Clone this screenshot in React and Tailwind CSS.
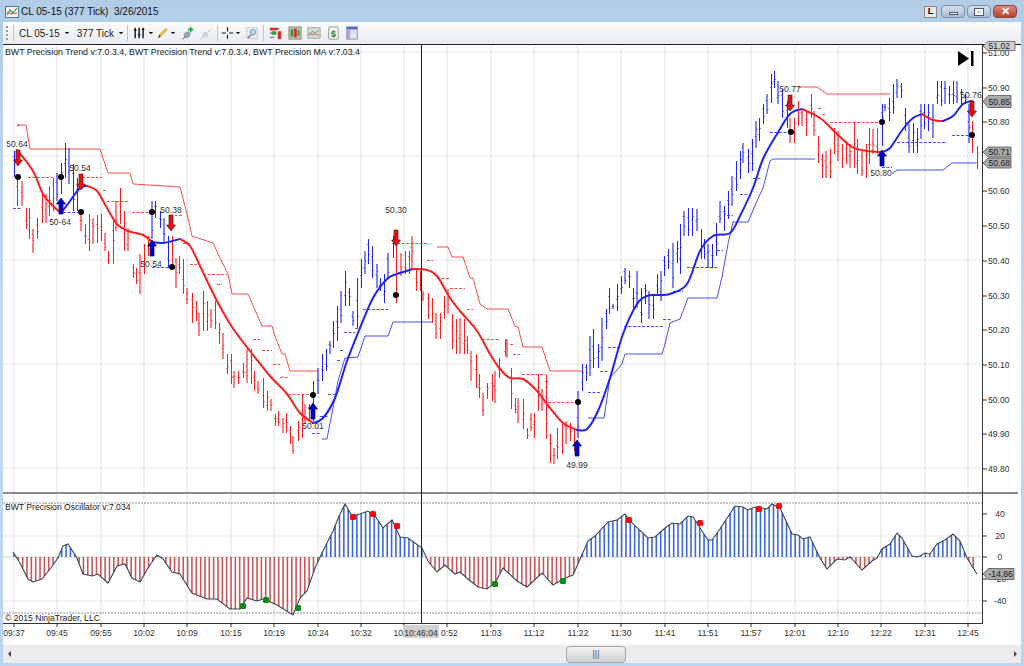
import { ChevronDown } from 'lucide-react';

const FONT = '"Liberation Sans", Arial, sans-serif';
const BLUE = '#1f24f0';
const RED = '#fb2020';

// [x, top, bottom] for every price bar, read off the chart
const BARS = [
  [14,150,176],[17,175,205],[22,180,205],[26,207,228],[29,207,238],[33,228,252],[37,217,238],[42,193,222],[46,193,222],[49,185,215],[53,177,210],
  [57,172,200],[61,162,193],[65,142,177],[69,147,183],[73,163,210],[77,177,210],[81,210,230],[85,223,243],[89,213,250],[93,217,243],[97,214,242],[101,213,240],
  [105,232,250],[108,250,263],[113,220,263],[116,200,230],[120,187,223],[124,210,250],[128,227,250],[133,263,277],[136,267,283],[140,253,293],[144,243,273],[148,235,255],
  [152,200,238],[155,200,217],[160,210,227],[164,217,243],[168,235,267],[172,235,267],[176,257,287],[179,255,273],[183,258,293],[187,287,303],[192,292,322],[196,300,320],
  [199,312,335],[203,290,330],[207,300,330],[211,308,327],[215,300,328],[219,322,343],[223,332,358],[227,353,373],[231,353,383],[234,370,387],[238,370,383],[243,362,377],
  [247,348,382],[251,348,383],[254,370,390],[258,380,393],[263,377,407],[267,390,410],[271,398,410],[275,413,425],[278,410,425],[283,417,432],[286,412,432],[290,425,443],
  [293,435,453],[298,420,440],[302,393,437],[305,403,423],[309,403,420],[313,380,420],[318,367,393],[322,353,380],[326,348,370],[330,340,353],[333,320,347],[337,305,340],
  [341,290,322],[345,270,305],[349,287,305],[353,310,325],[357,277,327],[361,258,287],[365,250,273],[368,238,263],[372,245,277],[377,263,287],[380,277,290],[384,273,302],
  [388,252,277],[393,235,257],[396,235,302],[401,252,275],[405,250,273],[409,250,273],[412,235,268],[416,267,290],[420,270,290],[423,290,300],[428,292,318],[432,297,322],
  [436,312,338],[440,312,338],[444,295,318],[448,288,313],[452,313,348],[456,318,353],[460,317,353],[464,318,353],[467,335,353],[471,350,380],[476,353,387],[479,373,397],
  [483,392,415],[487,382,398],[492,373,400],[495,370,402],[499,357,377],[505,338,355],[507,338,357],[511,367,408],[515,397,412],[518,397,422],[523,398,428],[527,427,438],
  [531,412,430],[534,412,437],[538,373,410],[542,388,410],[546,373,438],[550,433,462],[554,447,463],[557,427,458],[562,422,453],[566,420,443],[570,422,440],[574,427,450],
  [578,390,437],[582,363,390],[586,363,380],[590,335,375],[593,328,367],[598,343,367],[602,317,360],[606,308,328],[609,287,313],[613,303,308],[617,283,310],[621,275,293],
  [625,267,283],[629,270,287],[633,287,310],[637,270,307],[641,287,322],[645,283,303],[649,290,318],[653,293,318],[657,273,293],[661,270,300],[664,255,275],[668,248,268],
  [673,242,287],[677,240,262],[680,223,273],[684,210,235],[688,207,235],[692,207,235],[697,208,230],[701,228,258],[704,238,258],[708,243,267],[712,243,267],[716,222,255],
  [720,200,222],[724,205,230],[728,190,218],[732,175,205],[736,160,190],[740,150,178],[743,142,162],[748,148,172],[752,138,170],[756,120,147],[759,117,140],[763,103,123],
  [767,93,113],[771,73,102],[774,70,87],[778,80,103],[782,88,117],[787,100,127],[790,117,142],[794,117,142],[798,100,125],[802,107,125],[806,110,135],[811,93,117],
  [814,110,135],[818,135,162],[822,153,177],[826,150,177],[830,148,177],[834,127,153],[838,130,160],[842,143,167],[846,140,163],[850,143,167],[854,122,167],[857,138,173],
  [862,150,175],[866,143,177],[869,127,163],[873,128,153],[877,127,153],[882,103,145],[885,103,110],[889,97,120],[893,83,113],[897,78,97],[901,82,97],[905,107,130],
  [909,123,152],[913,122,152],[917,127,152],[921,103,138],[924,103,128],[928,103,130],[933,103,137],[937,80,103],[941,80,105],[945,80,103],[949,85,103],[953,80,103],
  [957,80,102],[961,88,105],[965,93,103],[969,103,142],[972,120,152],[977,145,168],
];

// x ranges where the bars are blue
const BLUE_RANGES = [[10,16],[57,78],[150,170],[312,394],[577,788],[880,935],[937,970]];

const MA = [
  [RED, [[17,149],[33,170],[43,193],[53,205],[61,212]]],
  [BLUE, [[61,212],[70,200],[80,187],[87,185]]],
  [RED, [[87,185],[97,190],[107,207],[117,223],[128,230],[143,234],[152,241]]],
  [BLUE, [[152,241],[163,242],[180,238]]],
  [RED, [[180,238],[190,245],[200,265],[217,300],[232,326],[250,350],[270,375],[287,393],[300,412],[313,422]]],
  [BLUE, [[313,422],[323,417],[335,397],[347,360],[360,327],[373,297],[387,278],[397,273],[413,268]]],
  [RED, [[413,268],[427,269],[437,275],[450,297],[460,310],[477,330],[490,353],[500,368],[510,377],[523,378],[537,390],[550,407],[563,422],[577,429]]],
  [BLUE, [[577,429],[587,428],[598,410],[610,377],[623,333],[637,303],[647,295],[657,294],[670,293],[687,283],[700,250],[713,235],[730,232],[740,215],[753,187],[763,158],[777,133],[790,113],[802,108]]],
  [RED, [[802,108],[820,117],[837,133],[852,146],[867,150],[882,151]]],
  [BLUE, [[882,151],[890,147],[903,128],[913,117],[922,113]]],
  [RED, [[922,113],[933,119],[943,120]]],
  [BLUE, [[943,120],[953,115],[963,103],[972,100]]],
];

const STOPS = [
  [RED, '17,124 26,124 30,148 100,148 108,172 130,172 133,183 180,186 187,213 192,235 213,242 220,257 228,273 232,293 248,293 262,325 272,325 275,335 282,353 285,353 290,370 318,370'],
  [BLUE, '322,438 327,438 333,407 338,380 345,357 358,356 365,335 388,335 393,321 432,321'],
  [RED, '437,246 448,246 452,256 463,256 470,277 473,277 480,303 487,308 508,308 515,325 518,326 523,346 542,346 550,370 583,370'],
  [BLUE, '588,417 604,417 610,377 622,363 625,353 662,353 665,343 670,322 680,318 688,297 717,297 722,276 728,243 733,221 748,221 757,200 763,187 770,160 773,158 815,158'],
  [RED, '798,86 817,86 827,93 890,93'],
  [BLUE, '892,173 897,169 943,169 952,162 976,162'],
];

// dashed levels: x1, x2, y
const RED_LEVELS = [[17,20,124],[28,55,176],[82,102,176],[103,107,189],[107,128,200],[132,152,211],[170,182,214],[183,190,242],[190,197,263],[203,227,273],[217,222,283],[253,260,338],[262,272,349],[273,280,363],[280,288,376],[288,313,393],[397,427,242],[427,433,259],[437,450,277],[450,465,287],[467,473,308],[472,477,324],[482,500,338],[510,513,343],[513,520,353],[522,545,373],[545,548,380],[548,577,401],[830,882,121],[818,822,107],[822,825,113]];
const BLUE_LEVELS = [[13,22,207],[63,80,211],[152,172,266],[312,320,432],[320,328,415],[328,335,393],[337,340,359],[340,343,349],[344,355,331],[355,360,327],[363,390,308],[588,600,391],[600,608,370],[608,620,346],[624,663,325],[663,671,318],[673,683,290],[687,718,266],[717,723,249],[727,733,214],[740,748,193],[753,761,177],[770,790,131],[882,892,166],[897,947,141],[952,972,134]];

const OSC = [[13,551],[20,562],[28,578],[33,581],[42,578],[50,568],[58,557],[63,545],[68,543],[77,557],[83,573],[92,575],[98,573],[108,582],[117,565],[125,563],[132,577],[140,581],[148,567],[157,554],[163,558],[172,571],[180,573],[192,592],[207,598],[217,598],[230,608],[240,608],[247,597],[257,600],[263,598],[277,604],[293,614],[300,597],[307,590],[315,567],[322,552],[333,530],[340,513],[345,503],[352,515],[360,513],[368,510],[375,515],[383,527],[392,519],[400,536],[408,537],[422,547],[428,560],[437,571],[445,564],[455,573],[460,571],[468,578],[478,586],[487,588],[495,582],[503,567],[517,580],[527,586],[542,572],[553,584],[563,578],[573,574],[588,540],[595,535],[608,521],[617,519],[625,513],[633,523],[648,537],[655,536],[665,527],[672,522],[680,523],[688,515],[693,516],[700,527],[708,539],[712,539],[720,528],[735,505],[743,506],[748,509],[755,506],[767,508],[772,503],[780,507],[792,533],[798,534],[803,538],[810,536],[820,557],[827,568],[837,558],[845,559],[850,556],[862,569],[872,560],[877,557],[882,548],[890,543],[897,532],[902,537],[912,555],[918,556],[925,552],[930,553],[937,543],[945,539],[953,533],[960,540],[967,557],[977,573]];

const TIMES = [[14,'09:37'],[57,'09:45'],[101,'09:55'],[144,'10:02'],[187,'10:09'],[231,'10:15'],[274,'10:19'],[318,'10:24'],[361,'10:32'],[404,'10:39'],[447,'10:52'],[491,'11:03'],[534,'11:12'],[578,'11:22'],[621,'11:30'],[665,'11:41'],[708,'11:51'],[751,'11:57'],[795,'12:01'],[838,'12:10'],[881,'12:22'],[925,'12:31'],[968,'12:45']];
const PRICES = [[52,'51.00'],[87,'50.90'],[121,'50.80'],[190,'50.60'],[225,'50.50'],[260,'50.40'],[295,'50.30'],[329,'50.20'],[364,'50.10'],[399,'50.00'],[433,'49.90'],[468,'49.80']];
const OSC_TICKS = [[513,'40'],[535,'20'],[556,'0'],[578,'-20'],[600,'-40']];

const DOWN = [[18,157],[81,181],[171,222],[396,237],[790,102],[972,108]];
const UP = [[61,205],[152,247],[313,410],[577,447],[882,157]];
const SIGNAL_LABELS = [[17,146,'50.64'],[60,224,'50-64'],[80,170,'50.54'],[171,212,'50.38'],[151,266,'50.54'],[396,212,'50.30'],[313,428,'50.01'],[577,467,'49.99'],[790,91,'50.77'],[881,175,'50.80'],[971,97,'50.76']];
const DOTS = [[18,176],[61,176],[81,211],[152,211],[172,266],[313,394],[396,294],[578,401],[791,131],[882,121],[972,134]];
const GREEN_DOTS = [[243,605],[266,599],[298,607],[495,583],[563,580]];
const RED_DOTS = [[353,516],[373,513],[397,525],[629,519],[700,522],[759,508],[779,505]];
const TAGS = [[45,4.5,'51.02','#cfcfcf',1015],[100.5,6,'50.85','#a9a9a9',1011],[151,5,'50.71','#a9a9a9',1011],[162,5,'50.68','#a9a9a9',1011],[573,5.5,'-14.86','#a9a9a9',1014]];

const smooth = (pts) => {
  let d = `M${pts[0][0]} ${pts[0][1]}`;
  for (let i = 0; i < pts.length - 1; i++) {
    const p0 = pts[i - 1] || pts[i];
    const p1 = pts[i];
    const p2 = pts[i + 1];
    const p3 = pts[i + 2] || p2;
    const c1x = p1[0] + (p2[0] - p0[0]) / 6;
    const c1y = p1[1] + (p2[1] - p0[1]) / 6;
    const c2x = p2[0] - (p3[0] - p1[0]) / 6;
    const c2y = p2[1] - (p3[1] - p1[1]) / 6;
    d += ` C${c1x} ${c1y} ${c2x} ${c2y} ${p2[0]} ${p2[1]}`;
  }
  return d;
};

const oscAt = (x) => {
  for (let i = 0; i < OSC.length - 1; i++) {
    const [x1, y1] = OSC[i];
    const [x2, y2] = OSC[i + 1];
    if (x >= x1 && x <= x2) return y1 + ((y2 - y1) * (x - x1)) / (x2 - x1);
  }
  return 556;
};

const barColor = (x) => (BLUE_RANGES.some(([a, b]) => x >= a && x <= b) ? BLUE : RED);

const Arrow = ({ x, y, up }) => (
  <path
    transform={`translate(${x} ${y})${up ? '' : ' rotate(180)'}`}
    d="M-2 8V-2H-4.5L0-8L4.5-2H2V8Z"
    fill={up ? '#0000c0' : '#e81010'}
    stroke={up ? '#000080' : '#502020'}
    strokeWidth="0.7"
  />
);

const Chart = () => {
  const oscLines = [];
  for (let x = 14; x <= 977; x += 4.34) oscLines.push(x);
  return (
    <svg className="block overflow-visible relative" width="1015" height="599" viewBox="3 44 1015 599" style={{ fontFamily: FONT }}>
      {/* grid */}
      {TIMES.map(([x]) => (
        <line key={x} x1={x} x2={x} y1="45" y2="622" stroke="#e5e5e5" strokeWidth="1.2" />
      ))}
      {[51, 155, 259, 363, 467, 535, 600].map((y) => (
        <line key={y} x1="3" x2="982" y1={y} y2={y} stroke="#e8e8e8" strokeWidth="1.2" />
      ))}

      {/* upper pane */}
      {STOPS.map(([c, pts]) => (
        <polyline key={pts} points={pts} fill="none" stroke={c} strokeWidth="1" opacity="0.8" />
      ))}
      {RED_LEVELS.map(([a, b, y]) => (
        <line key={`${a}-${y}`} x1={a} x2={b} y1={y + 0.5} y2={y + 0.5} stroke={RED} strokeDasharray="3 1.5" opacity="0.8" />
      ))}
      {BLUE_LEVELS.map(([a, b, y]) => (
        <line key={`${a}-${y}`} x1={a} x2={b} y1={y + 0.5} y2={y + 0.5} stroke={BLUE} strokeDasharray="3 1.5" opacity="0.8" />
      ))}
      {BARS.map(([x, top, bottom], i) => {
        const c = barColor(x);
        const h = bottom - top;
        const blurred = i % 3 === 2;
        const left = Math.round(top + h * (0.2 + (i % 5) * 0.12)) + 0.5;
        const right = Math.round(top + h * (0.3 + (i % 4) * 0.15)) + 0.5;
        const bx = blurred ? x : x + 0.5;
        return (
          <g key={x} stroke={c}>
            <line x1={bx} x2={bx} y1={top} y2={bottom} strokeWidth={blurred ? 1.3 : 1} opacity={blurred ? 0.85 : 1} />
            <line x1={bx - 1.5} x2={bx} y1={left} y2={left} opacity="0.6" />
            <line x1={bx} x2={bx + 1.5} y1={right} y2={right} opacity="0.6" />
          </g>
        );
      })}
      {MA.map(([c, pts]) => (
        <path key={pts[0].join()} d={smooth(pts)} fill="none" stroke={c} strokeWidth="2" strokeLinecap="round" />
      ))}
      {DOTS.map(([x, y]) => (
        <circle key={x} cx={x} cy={y} r="3" fill="#000" />
      ))}
      {DOWN.map(([x, y]) => (
        <Arrow key={x} x={x} y={y} />
      ))}
      {UP.map(([x, y]) => (
        <Arrow key={x} x={x} y={y} up />
      ))}
      {SIGNAL_LABELS.map(([x, y, t]) => (
        <text key={x} x={x} y={y} textAnchor="middle" fontSize="8.5" fill="#333">{t}</text>
      ))}
      <text x="5" y="54" fontSize="8.8" fill="#222">BWT Precision Trend v:7.0.3.4, BWT Precision Trend v:7.0.3.4, BWT Precision MA v:7.03.4</text>
      <path d="M958 50L969 57.5L958 65Z" fill="#000" />
      <rect x="971" y="50" width="2.5" height="15" fill="#000" />

      {/* lower pane */}
      <line x1="3" x2="1018" y1="492" y2="492" stroke="#8c8c8c" strokeWidth="2" />
      <line x1="3" x2="982" y1="502" y2="502" stroke="#777" strokeWidth="0.8" strokeDasharray="2 1" />
      <line x1="3" x2="982" y1="612" y2="612" stroke="#777" strokeWidth="0.8" strokeDasharray="2 1" />
      <line x1="3" x2="982" y1="556" y2="556" stroke="#d0d0d0" />
      {oscLines.map((x) => {
        const y = oscAt(x);
        return (
          <line key={x} x1={x} x2={x} y1="556" y2={y} stroke={y < 556 ? '#3c68dc' : '#c9565a'} strokeWidth="1.6" />
        );
      })}
      <polyline points={OSC.map((p) => p.join(',')).join(' ')} fill="none" stroke="#3f4650" strokeWidth="1.1" />
      {GREEN_DOTS.map(([x, y]) => (
        <rect key={x} x={x - 3} y={y - 3} width="6" height="6" rx="1.5" fill="#0a8a16" />
      ))}
      {RED_DOTS.map(([x, y]) => (
        <rect key={x} x={x - 3} y={y - 3} width="6" height="6" rx="1.5" fill="#f80808" />
      ))}
      <text x="5" y="509" fontSize="8.6" fill="#222">BWT Precision Oscillator v:7.034</text>
      <text x="5" y="620" fontSize="8.6" fill="#222">© 2015 NinjaTrader, LLC</text>

      {/* crosshair */}
      <line x1="421.5" x2="421.5" y1="44" y2="622" stroke="#222" strokeWidth="1" />

      {/* axes */}
      <line x1="982.5" x2="982.5" y1="44" y2="622.5" stroke="#333" />
      <line x1="3" x2="983" y1="622.5" y2="622.5" stroke="#333" />
      {TIMES.map(([x, t]) => (
        <g key={t}>
          <line x1={x} x2={x} y1="622" y2="626" stroke="#333" />
          {t !== '10:39' && t !== '10:52' && (
            <text x={x} y="635" textAnchor="middle" fontSize="8.6" fill="#333">{t}</text>
          )}
        </g>
      ))}
      <text x="393.5" y="635" fontSize="8.6" fill="#333">10</text>
      <rect x="403" y="624" width="36" height="13" fill="#d0d0d0" />
      <text x="421" y="635" textAnchor="middle" fontSize="8.6" fill="#333">10:46:04</text>
      <text x="441" y="635" fontSize="8.6" fill="#333">0:52</text>
      {PRICES.map(([y, t]) => (
        <g key={t}>
          <line x1="982" x2="987" y1={y} y2={y} stroke="#333" />
          <text x="988" y={y + 3} fontSize="8.6" fill="#333">{t}</text>
        </g>
      ))}
      {OSC_TICKS.map(([y, t]) => (
        <g key={t}>
          <line x1="982" x2="987" y1={y} y2={y} stroke="#333" />
          <text x="1000" y={y + 3} textAnchor="middle" fontSize="8.6" fill="#333">{t}</text>
        </g>
      ))}
      {TAGS.map(([y, r, t, c, end]) => (
        <g key={t}>
          <path d={`M983 ${y}L988 ${y - r}H${end}V${y + r}H988Z`} fill={c} stroke="#555" strokeWidth="0.8" />
          <text x="988.5" y={y + 3} fontSize="8.6" fill="#222">{t}</text>
        </g>
      ))}
    </svg>
  );
};

const Caret = () => <ChevronDown className="w-2 h-2 text-black shrink-0" fill="#000" strokeWidth={1} />;

const Sep = ({ className = '' }) => <div className={`w-px h-4 bg-[#c0c4c8] ${className}`} />;

const Tool = ({ w = 'w-[14px]', children }) => (
  <svg className={`${w} h-[16px] shrink-0`} viewBox="0 0 16 16">{children}</svg>
);

const Toolbar = () => (
  <div className="h-[22px] mx-[3px] flex items-center pl-[3px] text-[10px] text-[#222] bg-gradient-to-b from-[#fafbfc] to-[#e8ecf0]" style={{ fontFamily: FONT }}>
    <div className="w-[2px] h-3.5 border-l-2 border-dotted border-[#999]" />
    <Sep className="ml-[5px]" />
    <span className="ml-[5px]">CL 05-15</span>
    <div className="ml-[3px] mr-[6px]"><Caret /></div>
    <span>377 Tick</span>
    <div className="ml-[3px]"><Caret /></div>
    <Sep className="ml-[2px] mr-[5px]" />
    <Tool>
      <path d="M2.5 2V14M7 2V14M11.5 2V14" stroke="#111" strokeWidth="1.6" />
      <path d="M1 5H4M5.5 10H8.5M10 4H13" stroke="#111" strokeWidth="1.4" />
    </Tool>
    <Caret />
    <div className="w-[1px]" />
    <Tool w="w-[13px]">
      <path d="M3 14L4 10L12 2L14 4L6 12Z" fill="#f0c832" stroke="#a08010" strokeWidth="0.6" />
      <path d="M3 14L4 10L6 12Z" fill="#333" />
    </Tool>
    <Caret />
    <div className="w-[4px]" />
    <Tool>
      <ellipse cx="7" cy="10" rx="3.5" ry="3" fill="#9aa7b8" stroke="#6a7888" strokeWidth="0.6" transform="rotate(-40 7 10)" />
      <path d="M2 15L5 12" stroke="#6a7888" strokeWidth="1.2" />
      <path d="M11 1V7M8 4H14" stroke="#28a838" strokeWidth="2" />
    </Tool>
    <div className="w-1" />
    <Tool>
      <ellipse cx="7" cy="10" rx="3.5" ry="3" fill="#cfd3d6" transform="rotate(-40 7 10)" />
      <path d="M2 15L5 12M10 7L14 4" stroke="#c8cacc" strokeWidth="1.4" />
    </Tool>
    <Sep className="ml-[4px] mr-[3px]" />
    <Tool w="w-[13px]">
      <path d="M8 1V6M8 10V15M1 8H6M10 8H15" stroke="#111" strokeWidth="1.4" />
    </Tool>
    <Caret />
    <div className="w-[3px]" />
    <Tool>
      <rect x="2" y="2" width="12" height="12" fill="#eef0f2" stroke="#c4c8cc" />
      <circle cx="9" cy="7" r="3" fill="#c8dcf0" stroke="#6a88a8" />
      <path d="M7 10L3 14" stroke="#6a7888" strokeWidth="1.4" />
    </Tool>
    <Sep className="ml-[4px] mr-[5px]" />
    <div className="flex items-center gap-[5px]">
      <Tool>
        <path d="M1 3H12M1 8H9M1 13H6" stroke="#555" strokeWidth="1" />
        <rect x="1" y="2" width="9" height="3" fill="#d83030" />
        <rect x="10" y="6" width="4" height="9" fill="#d83030" />
        <rect x="3" y="6" width="5" height="4" fill="#30a040" />
      </Tool>
      <Tool>
        <rect x="1" y="1" width="14" height="14" fill="#b8c0a8" stroke="#8a9080" />
        <rect x="3" y="4" width="3" height="8" fill="#38903c" />
        <rect x="7" y="3" width="3" height="10" fill="#d03030" />
        <rect x="11" y="5" width="2" height="6" fill="#38903c" />
      </Tool>
      <Tool>
        <rect x="1" y="2" width="14" height="12" fill="#d8dcd8" stroke="#9aa09a" />
        <path d="M2 11L6 6L9 8L14 5" fill="none" stroke="#48a050" />
        <path d="M2 8L6 10L10 9L14 11" fill="none" stroke="#d05050" />
      </Tool>
      <Tool>
        <rect x="3" y="1" width="11" height="14" rx="1" fill="#f2f2ea" stroke="#909890" />
        <text x="8.5" y="12" textAnchor="middle" fontSize="10" fontWeight="700" fill="#1a7a30" style={{ fontFamily: FONT }}>$</text>
      </Tool>
      <Tool>
        <rect x="2" y="1" width="12" height="14" fill="#dfe6f4" stroke="#8088b0" />
        <rect x="2" y="1" width="12" height="3" fill="#5868c0" />
        <rect x="2" y="4" width="4" height="11" fill="#b8a0d8" />
      </Tool>
    </div>
  </div>
);

export default function App() {
  return (
    <div
      className="w-[1024px] h-[666px] overflow-hidden flex flex-col bg-gradient-to-b from-[#b4cde6] via-[#c2d8f0] to-[#bcd4ee]"
      style={{ fontFamily: FONT }}
    >
      {/* title bar */}
      <div className="h-[22px] flex items-start pl-[5px]">
        <svg className="w-[14px] h-[14px] mt-[5px] shrink-0" viewBox="0 0 14 14">
          <rect x="0.5" y="1.5" width="13" height="11" fill="#f4f6f8" stroke="#5878a0" />
          <path d="M2 10L5 5L8 8L12 3" fill="none" stroke="#30a050" strokeWidth="1.2" />
          <path d="M2 7L6 9L12 8" fill="none" stroke="#d05050" />
        </svg>
        <span className="ml-[2px] mt-[5px] text-[10px] leading-[14px] text-[#111] whitespace-pre">CL 05-15 (377 Tick)  3/26/2015</span>
        <div className="ml-auto mr-[7px] mt-[5px] flex items-center gap-[2px]">
          <div className="w-[13px] h-[12px] mr-[2px] flex items-center justify-center bg-[#e8e8e4] border border-[#888] text-[9px] font-semibold leading-none">L</div>
          <div className="w-[24px] h-[13px] flex items-center justify-center rounded-sm border border-[#7a90a8] bg-gradient-to-b from-[#d4e2f0] to-[#a8bed4]">
            <div className="w-[9px] h-[3px] mt-[3px] bg-white border border-[#556]" />
          </div>
          <div className="w-[24px] h-[13px] flex items-center justify-center rounded-sm border border-[#7a90a8] bg-gradient-to-b from-[#d4e2f0] to-[#a8bed4]">
            <div className="w-[8px] h-[6px] border-2 border-white outline outline-1 outline-[#556]" />
          </div>
          <div className="w-[24px] h-[13px] flex items-center justify-center rounded-sm border border-[#8a4a40] bg-gradient-to-b from-[#e08878] to-[#b83c2c] text-white text-[11px] font-bold leading-none">✕</div>
        </div>
      </div>

      <Toolbar />

      <div className="mx-[3px] h-[1px] bg-[#222]" />
      <div className="mx-[3px] bg-white">
        <Chart />
      </div>

      {/* scrollbar */}
      <div className="mx-[3px] h-[19px] bg-[#ececec] border-t border-[#f6f6f6] flex items-center relative">
        <span className="ml-[5px] w-0 h-0 border-y-[3px] border-y-transparent border-r-[3px] border-r-[#444]" />
        <div className="ml-[555px] w-[60px] h-[17px] bg-gradient-to-b from-[#f2f2f2] to-[#d2d2d2] border border-[#a4a4a4] rounded-sm flex items-center justify-center text-[9px] text-[#555] leading-none">|||</div>
        <span className="ml-auto mr-[4px] w-0 h-0 border-y-[3px] border-y-transparent border-l-[3px] border-l-[#444]" />
      </div>
    </div>
  );
}
